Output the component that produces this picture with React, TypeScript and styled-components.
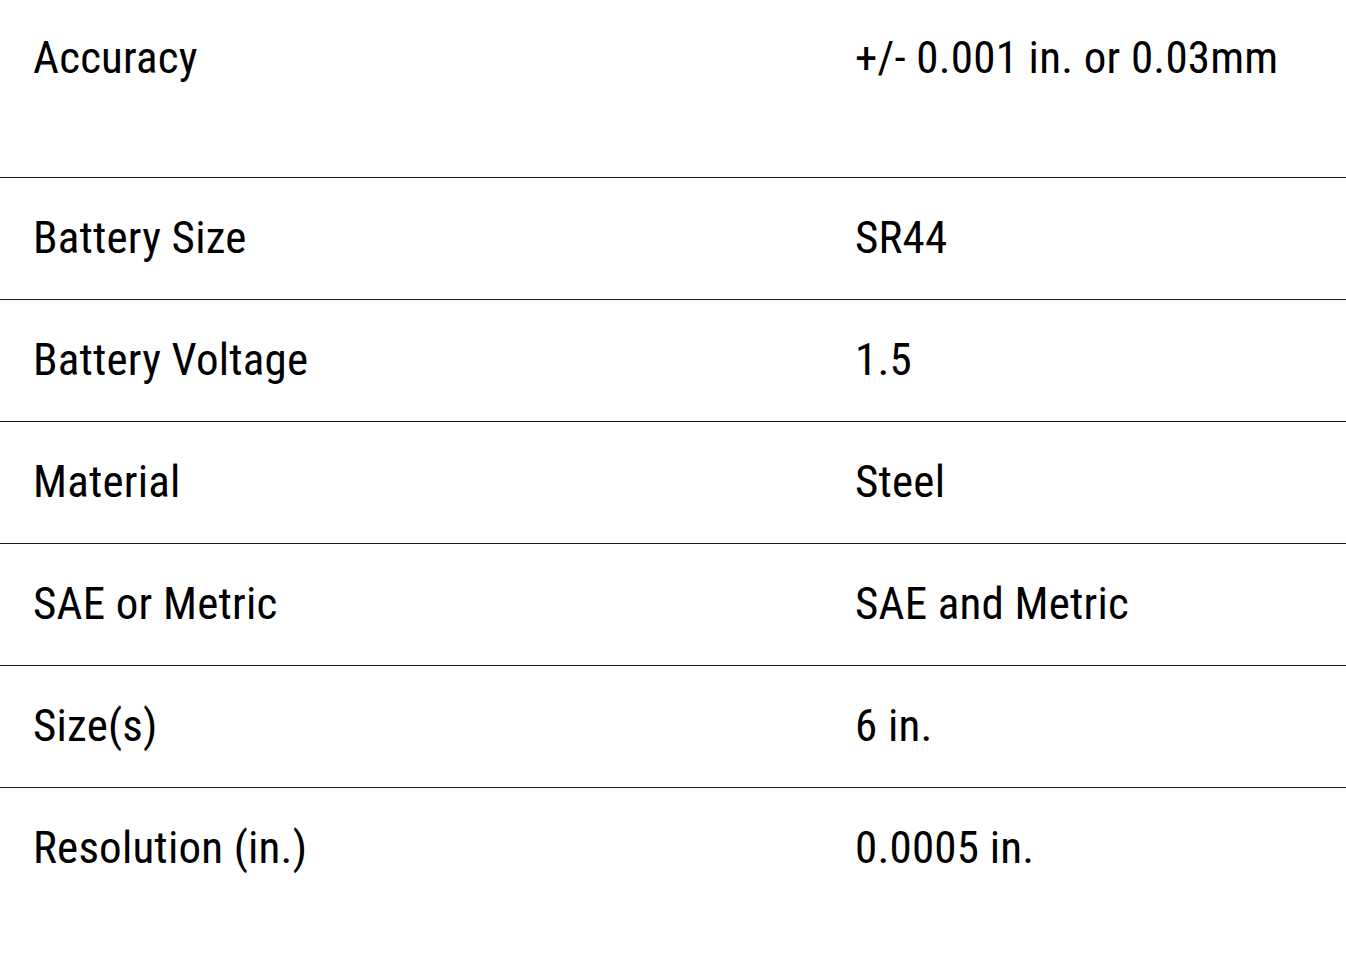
import React from 'react';
import styled, { createGlobalStyle } from 'styled-components';

const Global = createGlobalStyle`
  body {
    margin: 0;
    background: #ffffff;
  }
`

const Table = styled.table`
  width: 1346px;
  border-collapse: collapse;
  table-layout: fixed;
  font-family: 'Roboto Condensed', Roboto, 'Liberation Sans', sans-serif;
  font-stretch: condensed;
  color: #000;
`
const Row = styled.tr<{ $first?: boolean; $last?: boolean }>`
  height: ${p => (p.$first ? 177 : 122)}px;
  border-bottom: ${p => (p.$last ? 'none' : '1.5px solid #1a1a1a')};
`
const Cell = styled.td<{ $first?: boolean }>`
  padding: 0 0 0 34px;
  vertical-align: ${p => (p.$first ? 'top' : 'middle')};
  padding-top: ${p => (p.$first ? '30px' : '0')};
  font-size: 45px;
  line-height: 56px;
  letter-spacing: 0.2px;
  white-space: nowrap;
  &:first-child {
    padding-left: 33px;
  }
`

const specs = [
  ['Accuracy', '+/- 0.001 in. or 0.03mm'],
  ['Battery Size', 'SR44'],
  ['Battery Voltage', '1.5'],
  ['Material', 'Steel'],
  ['SAE or Metric', 'SAE and Metric'],
  ['Size(s)', '6 in.'],
  ['Resolution (in.)', '0.0005 in.'],
]

export default function App() {
  return (
    <>
      <Global />
      <Table>
        <colgroup>
          <col style={{ width: 821 }} />
          <col />
        </colgroup>
        <tbody>
          {specs.map(([k, v], i) => (
            <Row key={k} $first={i === 0} $last={i === specs.length - 1}>
              <Cell $first={i === 0}>{k}</Cell>
              <Cell $first={i === 0}>{v}</Cell>
            </Row>
          ))}
        </tbody>
      </Table>
    </>
  );
}
